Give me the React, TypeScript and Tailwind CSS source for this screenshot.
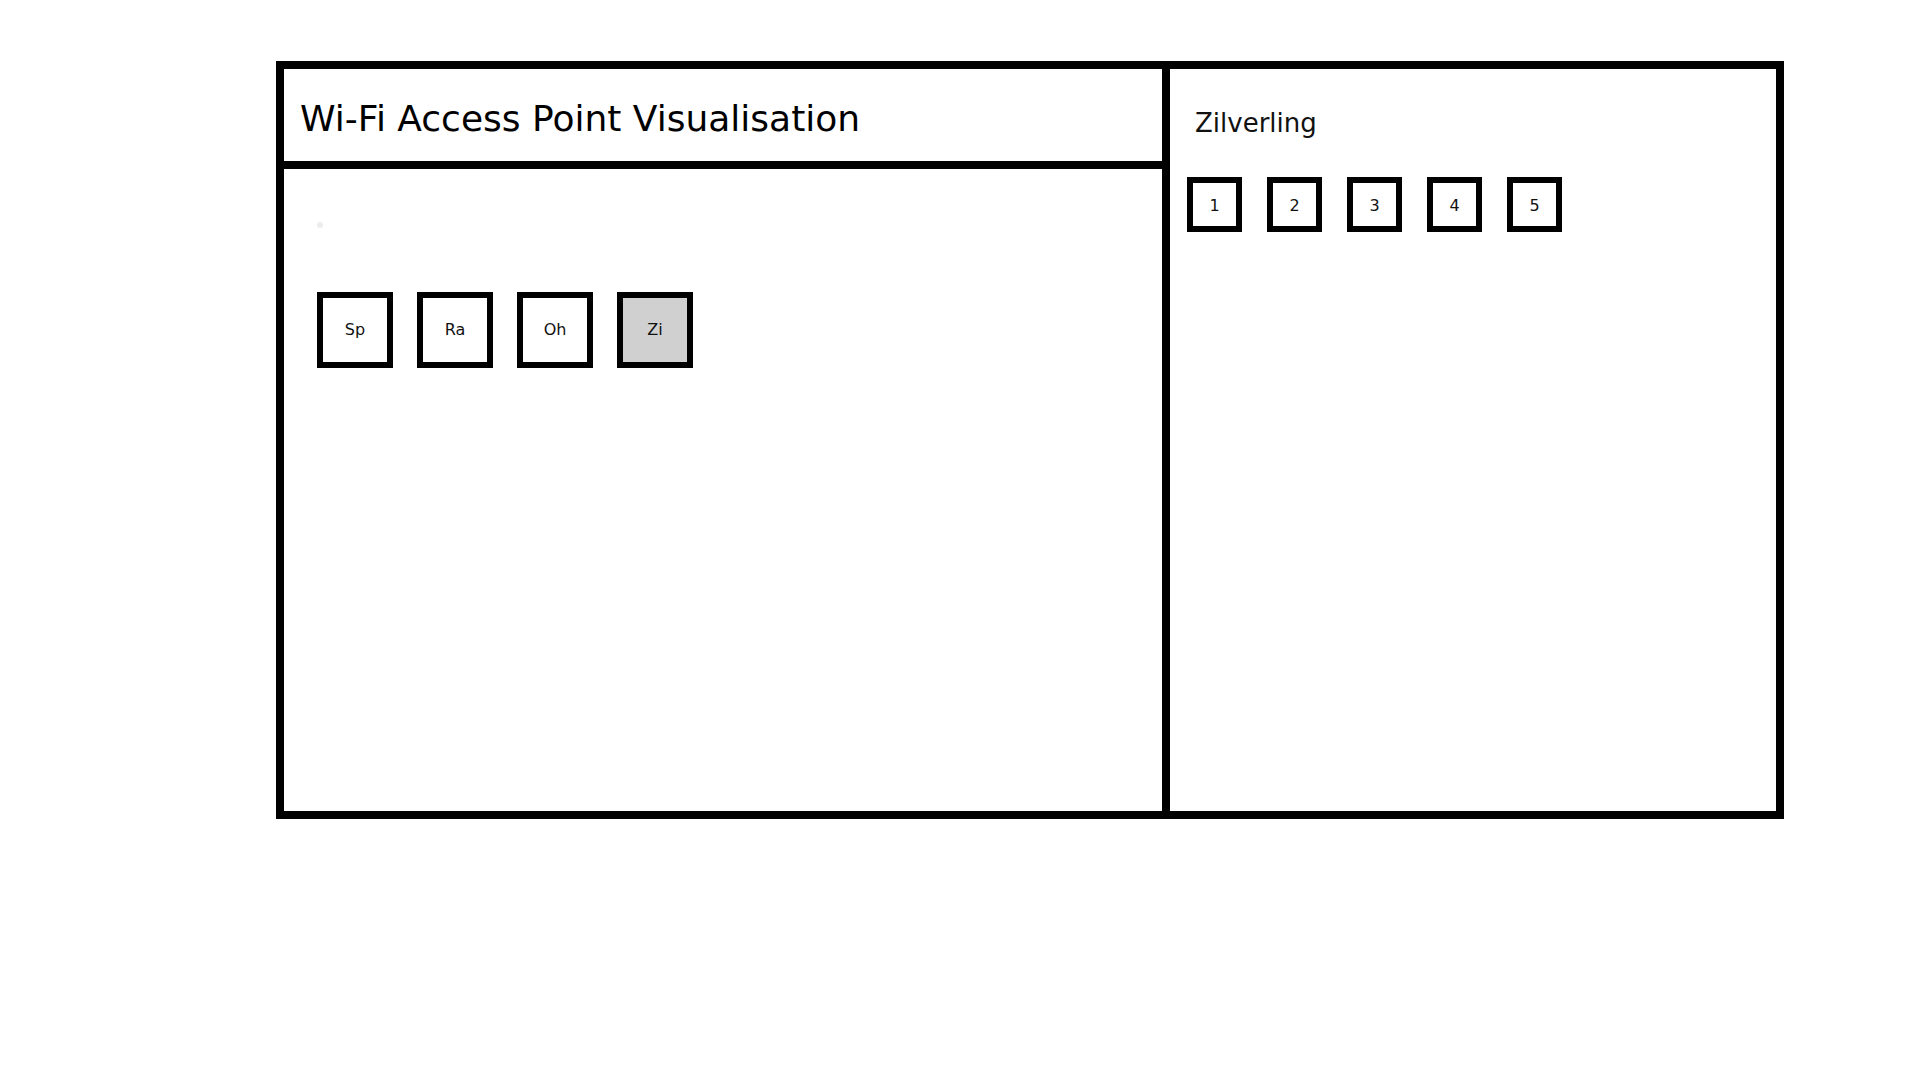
import React from "react";

const stations = ["Sp", "Ra", "Oh", "Zi"];
const selected = "Zi";
const aps = [1, 2, 3, 4, 5];

export default function App() {
  return (
    <div
      className="min-h-screen bg-white pl-[276px] pt-[61px] text-black"
      style={{ fontFamily: '"DejaVu Sans", Verdana, sans-serif' }}
    >
      <div className="flex w-[1508px] h-[758px] border-[8px] border-black">
        {/* left panel */}
        <div className="flex flex-col w-[886px] border-r-[8px] border-black">
          <div className="flex items-center h-[100px] border-b-[8px] border-black px-4 pt-[7px]">
            <h1 className="text-[36px] leading-normal font-normal">
              Wi-Fi Access Point Visualisation
            </h1>
          </div>
          <div className="flex flex-col pl-[33px] pt-[53px]">
            <div className="w-[6px] h-[6px] rounded-full bg-[#ececec]" />
            <div className="flex gap-6 mt-[64px]">
              {stations.map((s) => (
                <div
                  key={s}
                  className={`flex items-center justify-center w-[76px] h-[76px] border-[6px] border-black text-[16px] text-[#111] ${
                    s === selected ? "bg-[#d0d0d0]" : "bg-white"
                  }`}
                >
                  {s}
                </div>
              ))}
            </div>
          </div>
        </div>

        {/* right panel */}
        <div className="flex flex-col flex-1">
          <div className="pl-[25px] pt-[35px] text-[26px] leading-normal text-[#111]">
            Zilverling
          </div>
          <div className="flex gap-[25px] pl-[17px] mt-[34px]">
            {aps.map((n) => (
              <div
                key={n}
                className="flex items-center justify-center w-[55px] h-[55px] border-[6px] border-black text-[16px] text-[#111] pt-[2px]"
              >
                {n}
              </div>
            ))}
          </div>
        </div>
      </div>
    </div>
  );
}
